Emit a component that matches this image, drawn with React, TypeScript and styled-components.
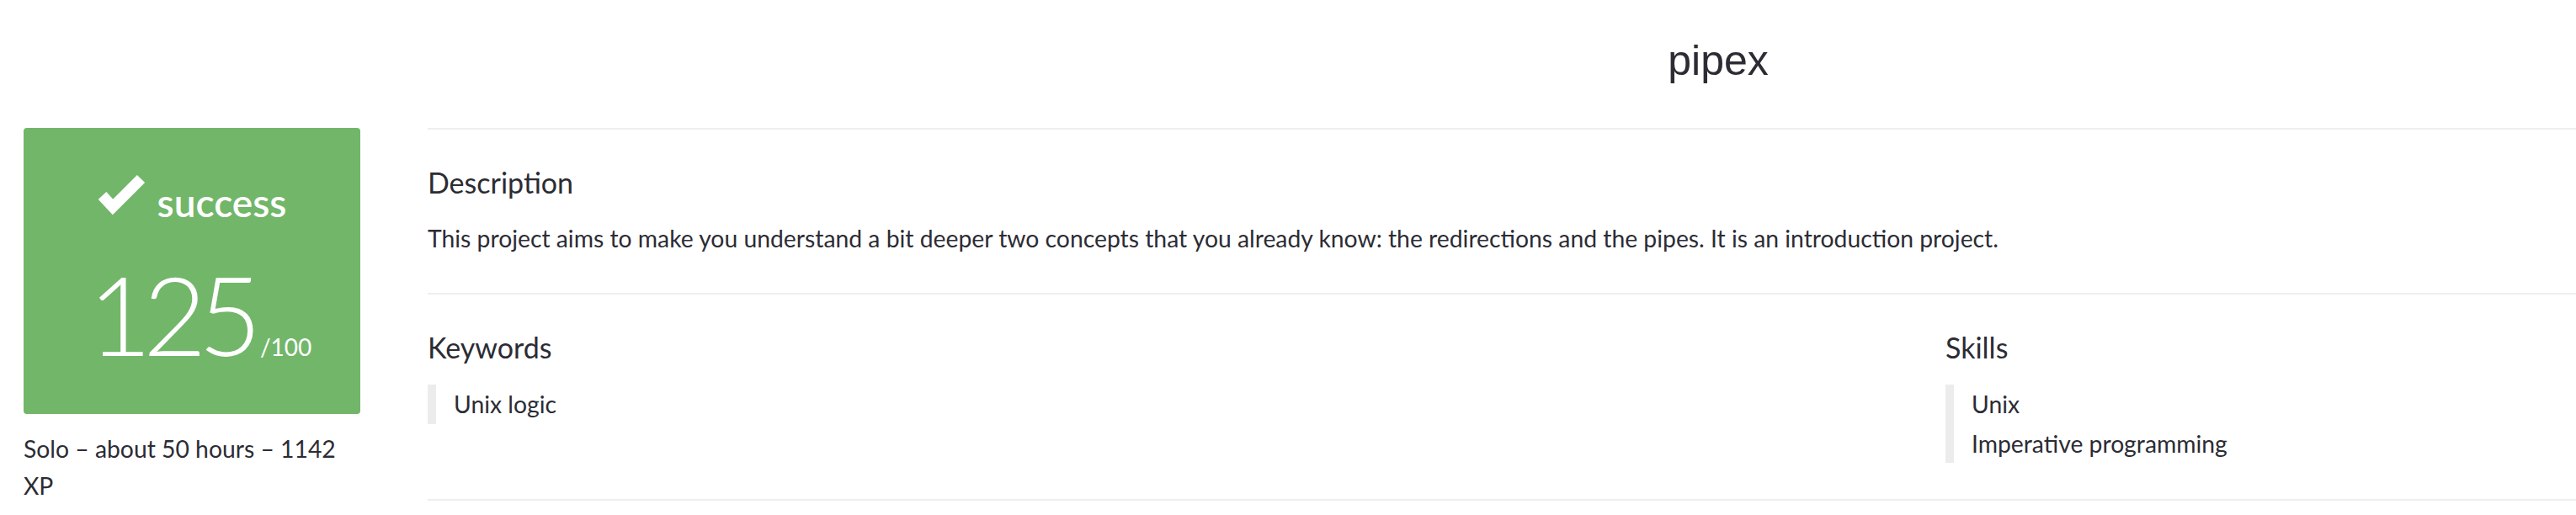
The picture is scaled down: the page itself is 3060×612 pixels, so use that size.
import React from "react";
import styled, { createGlobalStyle } from "styled-components";

const GlobalStyle = createGlobalStyle`
  html, body {
    margin: 0;
    padding: 0;
    background: #ffffff;
    overflow: hidden;
  }
  body {
    font-family: Lato, "Noto Sans", sans-serif;
    color: #2c2c34;
  }
`;

const Page = styled.div`
  display: flex;
  width: 3060px;
  overflow: hidden;
`;

const Sidebar = styled.aside`
  flex: none;
  width: 400px;
  padding: 152px 80px 0 28px;
`;

const ScoreCard = styled.div`
  height: 340px;
  background: #72b66a;
  border-radius: 4px;
  color: #ffffff;
  display: flex;
  flex-direction: column;
  align-items: center;
  padding-top: 55px;
  box-sizing: border-box;
`;

const Status = styled.div`
  display: flex;
  align-items: baseline;
  gap: 13px;
  font-size: 46px;
  font-weight: 600;
  line-height: 56px;
`;

const ScoreRow = styled.div`
  display: flex;
  align-items: baseline;
  gap: 8px;
  margin-top: 39px;
  padding-left: 19px;
`;

const Score = styled.span`
  font-size: 130px;
  font-weight: 300;
  line-height: 130px;
  letter-spacing: -10px;
`;

const Max = styled.span`
  font-size: 28px;
  font-weight: 400;
`;

const Meta = styled.p`
  margin: 19px 0 0;
  font-size: 28.3px;
  line-height: 44px;
`;

const Main = styled.main`
  flex: none;
  width: 3066px;
`;

const Header = styled.header`
  height: 154px;
  box-sizing: border-box;
  padding-top: 42px;
  border-bottom: 2px solid #eeeeee;
  text-align: center;
`;

const Title = styled.h1`
  margin: 0;
  font-family: "Liberation Sans", Arial, sans-serif;
  font-size: 50px;
  font-weight: 400;
  line-height: 60px;
`;

const Section = styled.section`
  display: flex;
  padding: 43px 0;
  border-bottom: 2px solid #eeeeee;
`;

const Column = styled.div<{ $width?: number }>`
  flex: ${(p) => (p.$width ? "none" : "1")};
  width: ${(p) => (p.$width ? `${p.$width}px` : "auto")};
`;

const Heading = styled.h2`
  margin: 0 0 24px;
  font-size: 34px;
  font-weight: 400;
  line-height: 40px;
`;

const Text = styled.p`
  margin: 0;
  font-size: 28.3px;
  line-height: 44px;
`;

const List = styled.ul`
  margin: 0;
  padding: 0 0 0 21px;
  list-style: none;
  border-left: 10px solid #ececec;
`;

const Item = styled.li`
  font-size: 28.3px;
  line-height: 46.5px;
`;

function Check() {
  return (
    <svg width="58" height="51" viewBox="0 0 58 51" aria-hidden="true">
      <polyline
        points="5.5,25.5 18,39 51.5,5.5"
        fill="none"
        stroke="#ffffff"
        strokeWidth="13"
        strokeLinejoin="miter"
      />
    </svg>
  );
}

export default function App() {
  return (
    <>
      <GlobalStyle />
      <Page>
        <Sidebar>
          <ScoreCard>
            <Status>
              <Check />
              <span>success</span>
            </Status>
            <ScoreRow>
              <Score>125</Score>
              <Max>/100</Max>
            </ScoreRow>
          </ScoreCard>
          <Meta>Solo – about 50 hours – 1142 XP</Meta>
        </Sidebar>
        <Main>
          <Header>
            <Title>pipex</Title>
          </Header>
          <Section>
            <Column>
              <Heading>Description</Heading>
              <Text>
                This project aims to make you understand a bit deeper two
                concepts that you already know: the redirections and the pipes.
                It is an introduction project.
              </Text>
            </Column>
          </Section>
          <Section>
            <Column $width={1803}>
              <Heading>Keywords</Heading>
              <List>
                <Item>Unix logic</Item>
              </List>
            </Column>
            <Column>
              <Heading>Skills</Heading>
              <List>
                <Item>Unix</Item>
                <Item>Imperative programming</Item>
              </List>
            </Column>
          </Section>
        </Main>
      </Page>
    </>
  );
}
